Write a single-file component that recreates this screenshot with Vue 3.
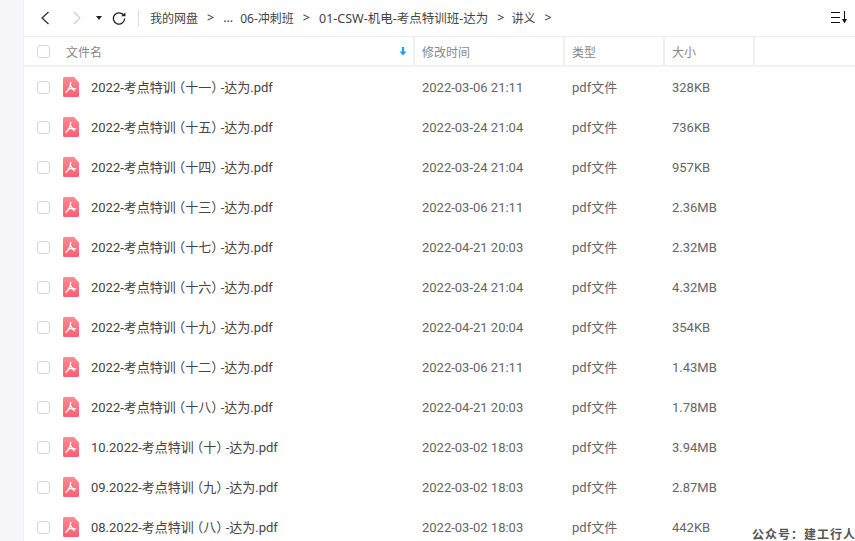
<template>
  <div class="page">
    <aside class="side"></aside>
    <main class="main">
      <div class="toolbar">
        <svg class="nav-icon" width="16" height="16" viewBox="0 0 16 16"><path d="M10.5 2 L4 8 L10.5 14" fill="none" stroke="#333" stroke-width="1.3" /></svg>
        <svg class="nav-icon next" width="16" height="16" viewBox="0 0 16 16"><path d="M5 2 L11 8 L5 14" fill="none" stroke="#ccc" stroke-width="1.1" /></svg>
        <span class="caret"></span>
        <svg class="refresh" width="14" height="14" viewBox="0 0 14 14"><path d="M11.8 4.6 A5.6 5.6 0 1 0 12.6 7.4" fill="none" stroke="#222" stroke-width="1.3" /><path d="M9.2 5.2 L13.6 5.2 L13.2 1.4 Z" fill="#222" /></svg>
        <span class="divider"></span>
        <nav class="crumbs">
          <span class="narrow">我的网盘</span><b>&gt;</b>
          <span>...</span>
          <span class="narrow">06-冲刺班</span><b>&gt;</b>
          <span>01-CSW-机电-考点特训班-达为</span><b class="tight">&gt;</b>
          <span class="narrow">讲义</span><b>&gt;</b>
        </nav>
        <svg class="sort" width="18" height="14" viewBox="0 0 18 14"><path d="M0 1.5 H9 M0 6.5 H9 M0 11.5 H9" stroke="#111" stroke-width="1.1" fill="none" /><path d="M13.5 0 V9" stroke="#111" stroke-width="1.1" /><path d="M11 8 H16 L13.5 12.5 Z" fill="#111" /></svg>
      </div>

      <div class="thead">
        <div class="c-name head-name">
          <span class="check"></span>
          <span class="head-label">文件名</span>
          <svg class="sort-arrow" width="8" height="9" viewBox="0 0 8 9"><path d="M4 0 V5" stroke="#1e9fff" stroke-width="2" /><path d="M0.5 4.5 H7.5 L4 8.5 Z" fill="#1e9fff" /></svg>
        </div>
        <div class="c-date head-cell">修改时间</div>
        <div class="c-type head-cell">类型</div>
        <div class="c-size head-cell">大小</div>
        <div class="c-rest"></div>
      </div>

      <div v-for="f in files" :key="f.name" class="row">
        <div class="c-name cell-name">
          <span class="check"></span>
          <svg class="pdf" width="16" height="20" viewBox="0 0 16 20">
            <defs>
              <linearGradient id="pdfFill" x1="0" y1="0" x2="0" y2="1">
                <stop offset="0" stop-color="#ff8a96" />
                <stop offset="1" stop-color="#fd5f70" />
              </linearGradient>
            </defs>
            <path d="M1.5 0 H11 L16 5.5 V18.5 A1.5 1.5 0 0 1 14.5 20 H1.5 A1.5 1.5 0 0 1 0 18.5 V1.5 A1.5 1.5 0 0 1 1.5 0 Z" fill="url(#pdfFill)" />
            <path d="M7.8 5 C7.6 8.5 6 12.5 2.8 15.5 M4.4 12.3 C7 11.5 10.5 11.1 13 11.9 M7.6 8.5 C8.4 10.5 10 12.9 11.6 14.1" fill="none" stroke="#fff" stroke-width="1.3" />
          </svg>
          <span class="fname">{{ f.head }}<span class="paren-l">（</span>{{ f.num }}<span class="paren-r">）</span>{{ f.tail }}</span>
        </div>
        <div class="c-date cell">{{ f.date }}</div>
        <div class="c-type cell type">pdf文件</div>
        <div class="c-size cell">{{ f.size }}</div>
      </div>

      <div class="mark">公众号：建工行人</div>
    </main>
  </div>
</template>

<script setup>
const rows = [
  ['2022-考点特训', '十一', '2022-03-06 21:11', '328KB'],
  ['2022-考点特训', '十五', '2022-03-24 21:04', '736KB'],
  ['2022-考点特训', '十四', '2022-03-24 21:04', '957KB'],
  ['2022-考点特训', '十三', '2022-03-06 21:11', '2.36MB'],
  ['2022-考点特训', '十七', '2022-04-21 20:03', '2.32MB'],
  ['2022-考点特训', '十六', '2022-03-24 21:04', '4.32MB'],
  ['2022-考点特训', '十九', '2022-04-21 20:04', '354KB'],
  ['2022-考点特训', '十二', '2022-03-06 21:11', '1.43MB'],
  ['2022-考点特训', '十八', '2022-04-21 20:03', '1.78MB'],
  ['10.2022-考点特训', '十', '2022-03-02 18:03', '3.94MB'],
  ['09.2022-考点特训', '九', '2022-03-02 18:03', '2.87MB'],
  ['08.2022-考点特训', '八', '2022-03-02 18:03', '442KB']
]

const files = rows.map(([head, num, date, size]) => ({
  name: head + num,
  head,
  num,
  tail: '-达为.pdf',
  date,
  size
}))
</script>

<style>
html, body { margin: 0; overflow: hidden; background: #fff; }
</style>

<style scoped>
.page {
  display: flex;
  width: 855px;
  height: 541px;
  overflow: hidden;
  font-family: Roboto, "Noto Sans CJK SC", sans-serif;
  font-size: 13px;
  color: #666;
}

.side {
  width: 23px;
  flex: none;
  background: #f7f7f9;
  border-right: 1px solid #f0f0f2;
}

.main {
  position: relative;
  flex: 1;
  min-width: 0;
}

.toolbar {
  display: flex;
  align-items: center;
  height: 35px;
  padding-bottom: 1px;
  border-bottom: 1px solid #eeeef0;
}

.nav-icon { margin-left: 14px; }
.nav-icon.next { margin-left: 15px; }

.caret {
  margin-left: 11px;
  width: 0;
  height: 0;
  border-left: 3px solid transparent;
  border-right: 3px solid transparent;
  border-top: 4px solid #222;
}

.refresh { margin-left: 10px; }

.divider {
  width: 1px;
  height: 16px;
  background: #ddd;
  margin-left: 12px;
}

.crumbs {
  display: flex;
  align-items: center;
  gap: 7px;
  margin-left: 11px;
  flex: 1;
  color: #444;
  font-size: 12.5px;
  font-family: "Noto Sans", "Noto Sans CJK SC", sans-serif;
  white-space: nowrap;
}

.crumbs .narrow { font-size: 12px; }

.crumbs b {
  font-weight: 400;
  color: #333;
  margin: 0 2px;
}

.crumbs b.tight { margin-right: 0; }

.sort { margin-right: 6px; }

.thead {
  display: flex;
  height: 28px;
  border-bottom: 2px solid #f3f3f7;
}

.row {
  display: flex;
  height: 40px;
  align-items: center;
}

.c-name { width: 389px; flex: none; display: flex; align-items: center; box-sizing: border-box; padding-left: 13px; }
.c-date { width: 150px; flex: none; box-sizing: border-box; padding-left: 9px; }
.c-type { width: 100px; flex: none; box-sizing: border-box; padding-left: 9px; }
.c-size { width: 90px; flex: none; box-sizing: border-box; padding-left: 9px; }
.c-rest { flex: 1; border-left: 2px solid #f0f0f3; }

.head-name { position: relative; }

.head-label { margin-left: 16px; color: #888; font-size: 12px; }

.sort-arrow { position: absolute; right: 6px; top: 10px; }

.head-cell {
  display: flex;
  align-items: center;
  border-left: 2px solid #f0f0f3;
  color: #888;
  font-size: 12px;
  padding-left: 7px;
}

.check {
  width: 11px;
  height: 11px;
  flex: none;
  border: 1px solid #d6d6d6;
  border-radius: 3px;
}

.pdf { margin-left: 13px; flex: none; }

.fname {
  margin-left: 12px;
  padding-bottom: 2px;
  color: #444;
  white-space: nowrap;
}

/* half-width brackets, the original font sets them tighter */
.paren-l { font-feature-settings: "halt"; padding-left: 2.9px; }
.paren-r { font-feature-settings: "halt"; padding-right: 2.9px; }

.cell { color: #666; }
.type { padding-bottom: 2px; }

.mark {
  position: absolute;
  right: -1px;
  bottom: -1px;
  padding: 0 0 0 4px;
  font-family: "Noto Sans CJK SC", sans-serif;
  font-size: 12px;
  font-weight: 700;
  letter-spacing: 1px;
  color: #555;
  background: rgba(255, 255, 255, 0.6);
  white-space: nowrap;
}
</style>
